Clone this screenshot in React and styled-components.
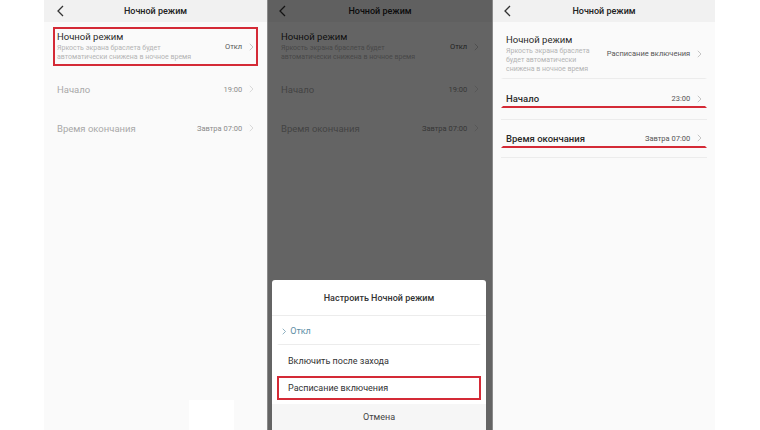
import React from 'react';
import styled, { createGlobalStyle } from 'styled-components';

const GlobalStyle = createGlobalStyle`
    html, body {
        margin: 0;
        padding: 0;
        background: #ffffff;
    }
    body {
        font-family: Roboto, "Noto Sans", "Liberation Sans", sans-serif;
    }
`;

const colors = {
    red: '#d42a36',
    text: '#2a2a2a',
    sub: '#b4b4b4',
    disabled: '#a9a9a9',
    value: '#8a8a8a',
    divider: '#ececec',
    teal: '#5d8ea6',
};

const Page = styled.div`
    width: 760px;
    height: 430px;
    display: flex;
    padding-left: 44px;
    box-sizing: border-box;
    overflow: hidden;
`;

const Screen = styled.div`
    position: relative;
    width: ${(p) => p.width}px;
    height: 430px;
    background: #fafafa;
    display: flex;
    flex-direction: column;
    border-left: ${(p) => (p.edge ? '1px solid #8a8a8a' : 'none')};
    box-sizing: border-box;
`;

const Header = styled.div`
    height: 22px;
    background: #f1f1f1;
    display: flex;
    align-items: center;
    justify-content: center;
    position: relative;
    font-size: 9px;
    font-weight: 500;
    color: #222;
`;

const Back = styled.svg`
    position: absolute;
    left: ${(p) => p.left}px;
    top: 5px;
`;

const List = styled.div`
    display: flex;
    flex-direction: column;
    padding: 5px ${(p) => p.pad}px 0;
`;

const Row = styled.div`
    display: flex;
    align-items: center;
    justify-content: space-between;
    height: ${(p) => p.height}px;
    padding: ${(p) => p.top || 0}px ${(p) => p.inner}px 0;
    box-sizing: border-box;
    border: ${(p) => (p.boxed ? `2px solid ${colors.red}` : '2px solid transparent')};
    border-bottom: ${(p) =>
        p.underline || p.boxed
            ? `2px solid ${colors.red}`
            : p.divider
            ? `1px solid ${colors.divider}`
            : '2px solid transparent'};
    margin-bottom: ${(p) => p.gap || 0}px;
`;

const Group = styled.div`
    padding-bottom: ${(p) => p.bottom}px;
    border-bottom: 1px solid ${colors.divider};
`;

const TextBlock = styled.div`
    display: flex;
    flex-direction: column;
    gap: 2px;
`;

const Title = styled.div`
    font-size: 9.5px;
    color: ${(p) => (p.disabled ? colors.disabled : colors.text)};
    font-weight: ${(p) => (p.bold ? 500 : 400)};
    white-space: nowrap;
`;

const Sub = styled.div`
    font-size: 7px;
    line-height: 9px;
    color: ${colors.sub};
    white-space: pre-line;
`;

const Right = styled.div`
    display: flex;
    align-items: center;
    gap: 7px;
    font-size: 7.5px;
    color: ${(p) => (p.dark ? '#555' : colors.value)};
    white-space: nowrap;
`;

const Overlay = styled.div`
    position: absolute;
    inset: 0;
    background: rgba(0, 0, 0, 0.6);
`;

const Sheet = styled.div`
    position: absolute;
    left: 4px;
    right: 6px;
    bottom: 0;
    height: 150px;
    background: #ffffff;
    border-radius: 3px 3px 0 0;
    display: flex;
    flex-direction: column;
`;

const SheetTitle = styled.div`
    height: 35px;
    display: flex;
    align-items: center;
    justify-content: center;
    font-size: 9px;
    font-weight: 500;
    color: #333;
    border-bottom: 1px solid ${colors.divider};
`;

const Option = styled.div`
    height: ${(p) => p.height || 29}px;
    display: flex;
    align-items: center;
    gap: 4px;
    margin: 0 5px;
    padding: 0 ${(p) => (p.active ? 3 : 9)}px;
    box-sizing: border-box;
    font-size: 9px;
    color: ${(p) => (p.active ? colors.teal : '#333')};
    border: 2px solid ${(p) => (p.boxed ? colors.red : 'transparent')};
    border-bottom: ${(p) =>
        p.boxed ? `2px solid ${colors.red}` : p.divider ? `1px solid ${colors.divider}` : '2px solid transparent'};
`;

const Cancel = styled.div`
    flex: 1;
    display: flex;
    align-items: center;
    justify-content: center;
    font-size: 9px;
    color: #444;
    background: #f6f6f6;
    margin-top: 4px;
`;

const Patch = styled.div`
    position: absolute;
    left: 145px;
    bottom: 0;
    width: 45px;
    height: 30px;
    background: #ffffff;
`;

function Chevron({ color = '#b8b8b8', size = 8 }) {
    return (
        <svg width={size * 0.6} height={size} viewBox="0 0 6 10">
            <polyline points="1,1 5,5 1,9" fill="none" stroke={color} strokeWidth="1" />
        </svg>
    );
}

function BackArrow({ left }) {
    return (
        <Back left={left} width="7" height="12" viewBox="0 0 7 12">
            <polyline points="6,1 1,6 6,11" fill="none" stroke="#333" strokeWidth="1.3" />
        </Back>
    );
}

function FirstScreen({ dimmed }) {
    return (
        <Screen width={dimmed ? 225 : 223} edge={dimmed}>
            <Header>
                <BackArrow left={dimmed ? 11 : 13} />
                Ночной режим
            </Header>
            <List pad={9}>
                <Row height={39} inner={2} boxed={!dimmed} gap={2}>
                    <TextBlock>
                        <Title>Ночной режим</Title>
                        <Sub>{'Яркость экрана браслета будет\nавтоматически снижена в ночное время'}</Sub>
                    </TextBlock>
                    <Right dark>
                        Откл
                        <Chevron />
                    </Right>
                </Row>
                <Row height={40} inner={2} top={2}>
                    <Title disabled>Начало</Title>
                    <Right>
                        19:00
                        <Chevron color="#d0d0d0" />
                    </Right>
                </Row>
                <Row height={40} inner={2}>
                    <Title disabled>Время окончания</Title>
                    <Right>
                        Завтра 07:00
                        <Chevron color="#d0d0d0" />
                    </Right>
                </Row>
            </List>
            {!dimmed && <Patch />}
            {dimmed && (
                <>
                    <Overlay />
                    <Sheet>
                        <SheetTitle>Настроить Ночной режим</SheetTitle>
                        <Option active divider>
                            <Chevron color={colors.teal} size={7} />
                            Откл
                        </Option>
                        <Option height={31}>Включить после захода</Option>
                        <Option boxed height={24}>Расписание включения</Option>
                        <Cancel>Отмена</Cancel>
                    </Sheet>
                </>
            )}
        </Screen>
    );
}

function ThirdScreen() {
    return (
        <Screen width={223} edge>
            <Header>
                <BackArrow left={11} />
                Ночной режим
            </Header>
            <List pad={8}>
                <Row height={52} inner={3} divider>
                    <TextBlock>
                        <Title>Ночной режим</Title>
                        <Sub>{'Яркость экрана браслета\nбудет автоматически\nснижена в ночное время'}</Sub>
                    </TextBlock>
                    <Right dark>
                        Расписание включения
                        <Chevron />
                    </Right>
                </Row>
                <Group bottom={11}>
                    <Row height={29} top={10} inner={3} underline>
                        <Title bold>Начало</Title>
                        <Right dark>
                            23:00
                            <Chevron />
                        </Right>
                    </Row>
                </Group>
                <Group bottom={9}>
                    <Row height={28} top={8} inner={3} underline>
                        <Title bold>Время окончания</Title>
                        <Right dark>
                            Завтра 07:00
                            <Chevron />
                        </Right>
                    </Row>
                </Group>
            </List>
        </Screen>
    );
}

export default function App() {
    return (
        <>
            <GlobalStyle />
            <Page>
                <FirstScreen />
                <FirstScreen dimmed />
                <ThirdScreen />
            </Page>
        </>
    );
}
